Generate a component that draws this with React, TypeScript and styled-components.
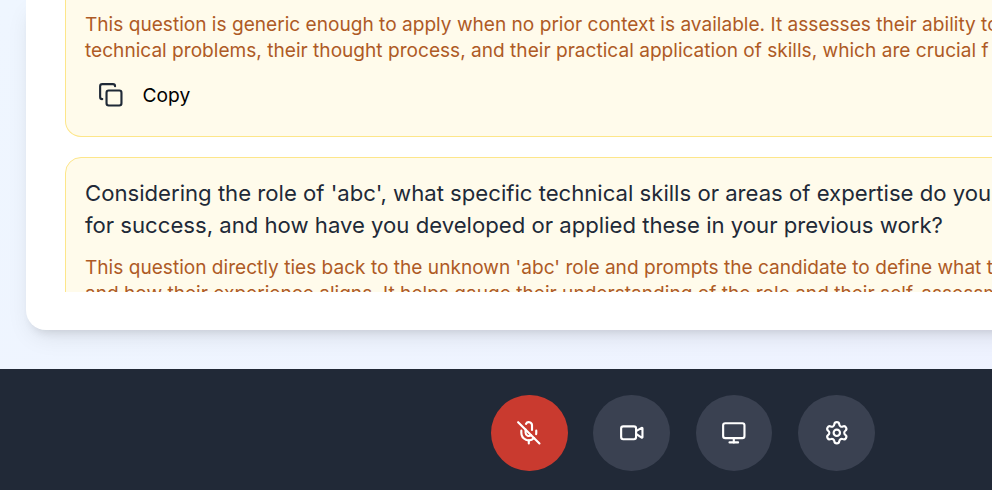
import React from "react";
import styled, { createGlobalStyle } from "styled-components";
import { Copy, MicOff, Monitor, Settings, Video } from "lucide-react";

const Global = createGlobalStyle`
  html, body { margin: 0; padding: 0; }
  body { font-family: Inter, "Liberation Sans", sans-serif; }
`;

const Page = styled.div`
  width: 992px;
  height: 490px;
  display: flex;
  flex-direction: column;
  overflow: hidden;
  background: linear-gradient(135deg, #eff6ff 0%, #eef2ff 100%);
`;

const Main = styled.main`
  height: 369px;
  flex: none;
  overflow: hidden;
  padding-left: 26px;
`;

const Card = styled.section`
  width: 1240px;
  height: 330px;
  box-sizing: border-box;
  padding: 0 0 38px 39px;
  background: #fff;
  border-radius: 0 0 20px 20px;
  box-shadow: 0 10px 25px -5px rgba(0, 0, 0, 0.1), 0 8px 10px -6px rgba(0, 0, 0, 0.1);
`;

const List = styled.div`
  height: 292px;
  overflow: hidden;
  display: flex;
  flex-direction: column;
  gap: 20px;
`;

const Item = styled.article<{ $clipTop?: boolean }>`
  flex: none;
  box-sizing: border-box;
  background: #fffbeb;
  border: 1px solid #fde68a;
  border-radius: 16px;
  padding: 19px 19px 18px;
  ${(p) => (p.$clipTop ? "border-top: 0; border-radius: 0 0 16px 16px; padding-top: 12px; height: 137px;" : "")}
`;

const Question = styled.h3`
  margin: 0 0 14px;
  font-size: 22.13px;
  line-height: 32px;
  font-weight: 430;
  color: #212937;
  white-space: nowrap;
`;

const Reason = styled.p`
  margin: 0;
  font-size: 19.1px;
  line-height: 25.6px;
  color: #ae5a25;
  white-space: nowrap;
`;

const CopyButton = styled.button`
  display: flex;
  align-items: center;
  gap: 19px;
  margin-top: 13px;
  padding: 6px 13px;
  border: 0;
  background: transparent;
  color: #000;
  font: 400 19.2px/26px Inter, "Liberation Sans", sans-serif;
  svg { color: #1f2937; }
`;

const Bar = styled.footer`
  flex: 1;
  background: #212937;
  display: flex;
  align-items: flex-start;
  gap: 25.6px;
  padding: 25.6px 0 0 490.8px;
`;

const Round = styled.button<{ $danger?: boolean }>`
  width: 76.8px;
  height: 76.8px;
  flex: none;
  border: 0;
  padding: 0;
  border-radius: 50%;
  display: flex;
  align-items: center;
  justify-content: center;
  color: #fff;
  background: ${(p) => (p.$danger ? "#c93a2f" : "#3a4151")};
`;

export default function App() {
  return (
    <Page>
      <Global />
      <Main>
        <Card>
          <List>
            <Item $clipTop>
              <Reason>
                This question is generic enough to apply when no prior context is available. It assesses their ability to
                <br />
                technical problems, their thought process, and their practical application of skills, which are crucial f
              </Reason>
              <CopyButton>
                <Copy size={25.6} />
                Copy
              </CopyButton>
            </Item>
            <Item>
              <Question>
                Considering the role of 'abc', what specific technical skills or areas of expertise do you
                <br />
                for success, and how have you developed or applied these in your previous work?
              </Question>
              <Reason>
                This question directly ties back to the unknown 'abc' role and prompts the candidate to define what t
                <br />
                and how their experience aligns. It helps gauge their understanding of the role and their self-assessm
              </Reason>
            </Item>
          </List>
        </Card>
      </Main>
      <Bar>
        <Round $danger aria-label="Unmute"><MicOff size={25.6} /></Round>
        <Round aria-label="Camera"><Video size={25.6} /></Round>
        <Round aria-label="Share screen"><Monitor size={25.6} /></Round>
        <Round aria-label="Settings"><Settings size={25.6} /></Round>
      </Bar>
    </Page>
  );
}
